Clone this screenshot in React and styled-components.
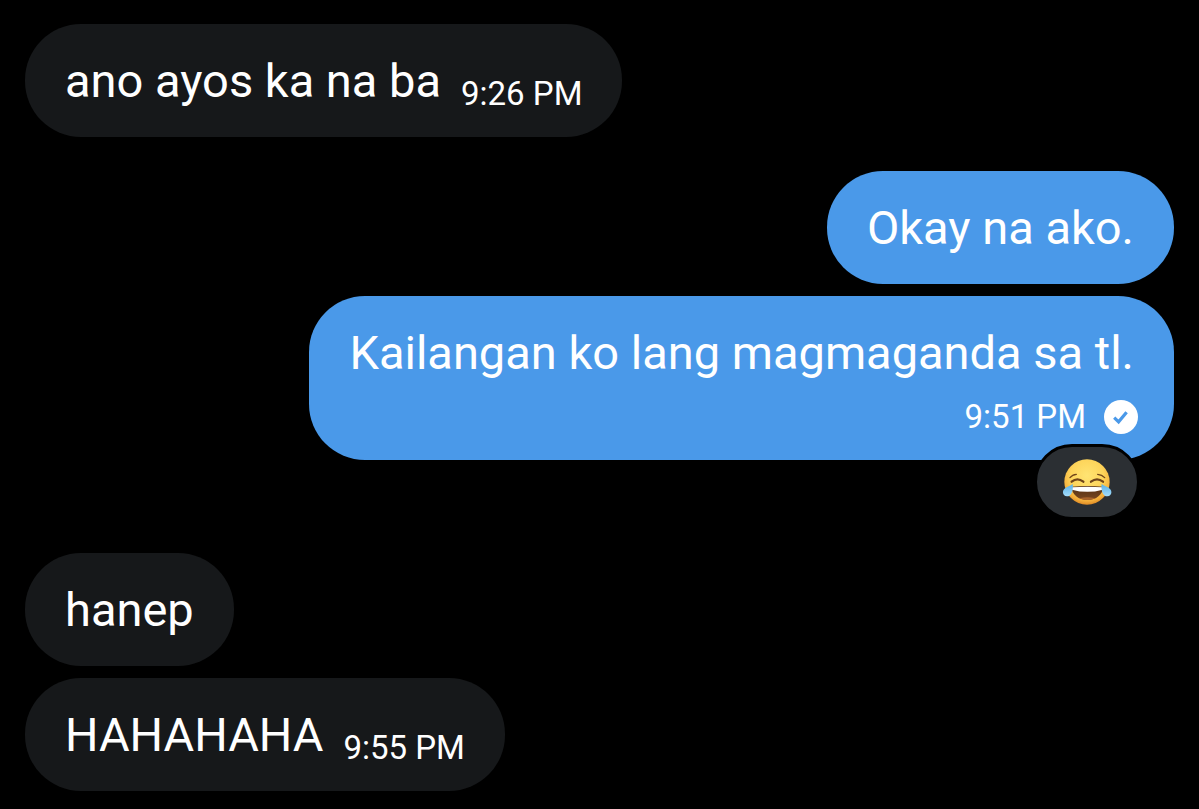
import styled, { createGlobalStyle } from 'styled-components';

const GlobalStyle = createGlobalStyle`
  body{
    margin: 0;
    background: #000;
    font-family: Roboto, "Open Sans", sans-serif;
  }
`

const Thread = styled.main`
  display: flex;
  flex-direction: column;
  padding: 24px 25px 18px;
`

const Group = styled.section`
  display: flex;
  flex-direction: column;
  align-items: ${(props) => (props.$mine ? "flex-end" : "flex-start")};
  gap: 12px;
  margin-bottom: ${(props) => props.$space || "0"};
`

const Bubble = styled.div`
  position: relative;
  display: flex;
  flex-direction: ${(props) => (props.$mine ? "column" : "row")};
  gap: ${(props) => (props.$mine ? "17px" : "20px")};
  padding: 27px 40px 26px;
  border-radius: 56px;
  color: #fff;
  background: ${(props) => (props.$mine ? "#4a99e9" : "#16181a")};
`

const Text = styled.p`
  margin: 0;
  font-size: 47px;
  line-height: 60px;
`

const Meta = styled.div`
  display: flex;
  align-items: center;
  align-self: flex-end;
  gap: 18px;
  margin-right: ${(props) => (props.$mine ? "-4px" : "0")};
`

const Time = styled.time`
  font-size: 33px;
  line-height: 34px;
  white-space: nowrap;
`

const Sent = styled.svg`
  width: 34px;
  height: 34px;
`

const Reaction = styled.button`
  position: absolute;
  right: 34px;
  bottom: -60px;
  display: flex;
  align-items: center;
  justify-content: center;
  width: 106px;
  height: 76px;
  padding: 0;
  border: 3px solid #000;
  border-radius: 38px;
  background: #2b2f33;
  cursor: pointer;
`

const Emoji = styled.svg`
  width: 50px;
  height: 48px;
`

const SentIcon = () => (
  <Sent viewBox="0 0 34 34" role="img" aria-label="Sent">
    <circle cx="17" cy="17" r="17" fill="#fff" />
    <path d="M10.2 17.6 L14.6 21.8 L22.6 12.2" fill="none" stroke="#4a99e9" strokeWidth="3.2" />
  </Sent>
)

const JoyIcon = () => (
  <Emoji viewBox="-3 -2 150 144" aria-hidden="true">
    <defs>
      <radialGradient id="face" cx="0.5" cy="0.36" r="0.66">
        <stop offset="0" stopColor="#ffe473" />
        <stop offset="0.55" stopColor="#fdd45a" />
        <stop offset="0.85" stopColor="#f4ae3a" />
        <stop offset="1" stopColor="#d98120" />
      </radialGradient>
      <linearGradient id="mouth" x1="0" y1="0" x2="0" y2="1">
        <stop offset="0" stopColor="#4e2c12" />
        <stop offset="1" stopColor="#7d4a22" />
      </linearGradient>
      <linearGradient id="tear" x1="0" y1="0" x2="0" y2="1">
        <stop offset="0" stopColor="#59b1e8" />
        <stop offset="1" stopColor="#a4dcfa" />
      </linearGradient>
      <clipPath id="grin">
        <path d="M25 84 Q73 80 121 84 C120 107 99 124 73 124 C47 124 26 107 25 84 Z" />
      </clipPath>
    </defs>
    <circle cx="72" cy="70" r="68" fill="url(#face)" />
    <g fill="none" stroke="#70451a" strokeLinecap="round">
      <path d="M21 57 Q28 48 40 47" strokeWidth="4" />
      <path d="M104 47 Q117 48 125 57" strokeWidth="4" />
      <path d="M26 69 Q43 55 61 69" strokeWidth="7" />
      <path d="M84 69 Q102 55 120 69" strokeWidth="7" />
    </g>
    <g clipPath="url(#grin)">
      <path d="M20 76 H126 V128 H20 Z" fill="url(#mouth)" />
      <path d="M27 86 Q73 82 119 86 V93 Q73 106 27 93 Z" fill="#fff" />
      <ellipse cx="73" cy="124" rx="28" ry="8" fill="#a8642c" />
    </g>
    <path d="M29 76 C31 90 28 113 12 113 C0 113 -4 99 4 91 C10 84 20 84 29 76 Z" fill="url(#tear)" />
    <path d="M116 76 C114 90 117 113 133 113 C145 113 149 99 141 91 C135 84 125 84 116 76 Z" fill="url(#tear)" />
  </Emoji>
)

const groups = [
  {
    space: "34px",
    messages: [{ text: "ano ayos ka na ba", time: "9:26 PM" }],
  },
  {
    mine: true,
    space: "93px",
    messages: [
      { text: "Okay na ako." },
      { text: "Kailangan ko lang magmaganda sa tl.", time: "9:51 PM", reaction: true },
    ],
  },
  {
    messages: [{ text: "hanep" }, { text: "HAHAHAHA", time: "9:55 PM" }],
  },
]

const Message = ({ message, mine }) => {
  return (
    <Bubble $mine={mine}>
      <Text>{message.text}</Text>
      {
        message.time &&
        <Meta $mine={mine}>
          <Time>{message.time}</Time>
          {mine && <SentIcon />}
        </Meta>
      }
      {
        message.reaction &&
        <Reaction type="button" aria-label="Face with tears of joy">
          <JoyIcon />
        </Reaction>
      }
    </Bubble>
  )
}

const App = () => {
  return (
    <>
      <GlobalStyle />
      <Thread>
        {groups.map((group, i) => (
          <Group key={i} $mine={group.mine} $space={group.space}>
            {group.messages.map((message) => (
              <Message key={message.text} message={message} mine={group.mine} />
            ))}
          </Group>
        ))}
      </Thread>
    </>
  )
}

export default App
